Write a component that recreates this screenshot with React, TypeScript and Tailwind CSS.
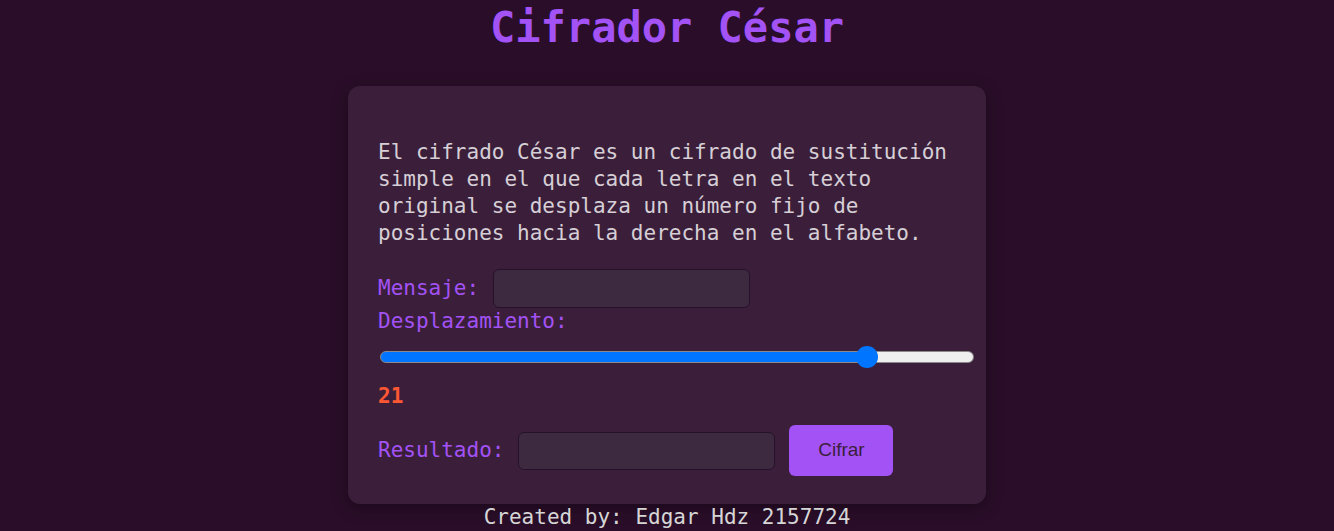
import React, { useState } from 'react';

const mono = { fontFamily: '"DejaVu Sans Mono", "Liberation Mono", monospace' };

function caesar(text: string, shift: number) {
  return text.replace(/[a-z]/gi, (c) => {
    const base = c === c.toUpperCase() ? 65 : 97;
    return String.fromCharCode(((c.charCodeAt(0) - base + shift) % 26) + base);
  });
}

const App: React.FC = () => {
  const [mensaje, setMensaje] = useState('');
  const [shift, setShift] = useState(21);
  const [resultado, setResultado] = useState('');

  const pct = ((shift - 1) / 24) * 100;

  return (
    <div className="min-h-[531px] bg-[#2a0e29] flex flex-col items-center" style={mono}>
      <h1 className="text-[42px] leading-[56px] font-bold text-[#a352f5]">Cifrador César</h1>

      {/* tarjeta */}
      <div className="mt-[30px] w-[638px] bg-[#3b1f3a] rounded-xl shadow-[0_4px_16px_rgba(0,0,0,0.35)] pl-[30px] pr-[12px] pt-[53px] pb-[28px]">
        <p className="text-[21px] leading-[27px] text-[#d6cfd6] pr-[20px]">
          El cifrado César es un cifrado de sustitución simple en el que cada letra en el texto original se desplaza un número fijo de posiciones hacia la derecha en el alfabeto.
        </p>

        <div className="mt-[22px] flex items-center gap-[14px]">
          <label className="text-[21px] leading-[27px] text-[#a352f5]">Mensaje:</label>
          <input
            value={mensaje}
            onChange={(e) => setMensaje(e.target.value)}
            className="w-[257px] h-[39px] rounded-md bg-[#3e2a40] border border-[#25122a] text-[#d6cfd6] px-2 outline-none"
          />
        </div>

        <label className="block text-[21px] leading-[27px] text-[#a352f5]">Desplazamiento:</label>

        <input
          type="range"
          min={1}
          max={25}
          value={shift}
          onChange={(e) => setShift(Number(e.target.value))}
          className="mt-[16px] ml-[2px] block w-[594px] h-[12px] appearance-none rounded-full border border-[#8a8a8a] outline-none [&::-webkit-slider-thumb]:appearance-none [&::-webkit-slider-thumb]:w-[22px] [&::-webkit-slider-thumb]:h-[22px] [&::-webkit-slider-thumb]:rounded-full [&::-webkit-slider-thumb]:bg-[#0075ff]"
          style={{ background: `linear-gradient(to right, #0075ff ${pct}%, #efefef ${pct}%)` }}
        />

        <div className="mt-[20px] text-[21px] leading-[27px] font-bold text-[#ff5733]">{shift}</div>

        <div className="mt-[15px] flex items-center">
          <label className="text-[21px] leading-[27px] text-[#a352f5]">Resultado:</label>
          <input
            readOnly
            value={resultado}
            className="ml-[14px] w-[257px] h-[38px] rounded-md bg-[#3e2a40] border border-[#25122a] text-[#d6cfd6] px-2 outline-none"
          />
          <button
            onClick={() => setResultado(caesar(mensaje, shift))}
            className="ml-[14px] w-[104px] h-[51px] rounded-md bg-[#a352f5] text-[#3b1f3a] text-[19px]"
            style={{ fontFamily: '"Liberation Sans", Arial, sans-serif' }}
          >
            Cifrar
          </button>
        </div>
      </div>

      <footer className="text-[21px] leading-[27px] text-[#d6d6d6]">Created by: Edgar Hdz 2157724</footer>
    </div>
  );
};

export default App;
